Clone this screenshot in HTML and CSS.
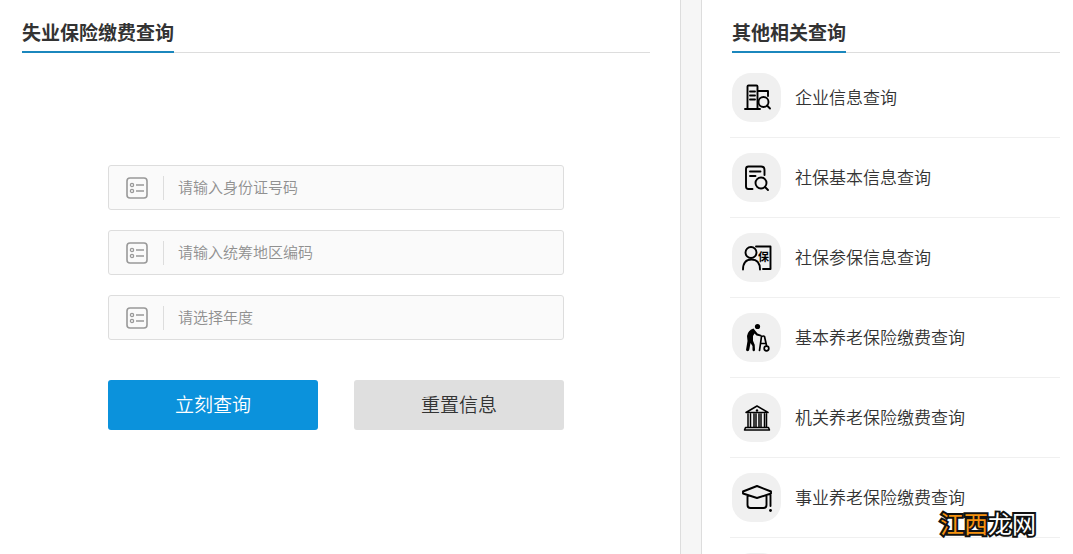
FILE: index.html
```html
<!DOCTYPE html>
<html lang="zh-CN">
<head>
<meta charset="utf-8">
<title>失业保险缴费查询</title>
<link rel="stylesheet" href="styles.css">
</head>
<body>
<svg class="defs" aria-hidden="true">
  <symbol id="icon-form" viewBox="0 0 22 22">
    <rect x="1" y="1" width="20" height="20" rx="3" stroke-width="1.6"/>
    <circle cx="6" cy="8" r="1.6"/><circle cx="6" cy="14" r="1.6"/>
    <path d="M10 8h8M10 14h8"/>
  </symbol>
</svg>
<div class="page">
  <main class="panel query">
    <header class="head"><h1 class="title">失业保险缴费查询</h1></header>
    <form class="form">
      <label class="field">
        <svg class="field-icon"><use href="#icon-form"/></svg>
        <input class="control" type="text" placeholder="请输入身份证号码" aria-label="身份证号码">
      </label>
      <label class="field">
        <svg class="field-icon"><use href="#icon-form"/></svg>
        <input class="control" type="text" placeholder="请输入统筹地区编码" aria-label="统筹地区编码">
      </label>
      <label class="field">
        <svg class="field-icon"><use href="#icon-form"/></svg>
        <select class="control" aria-label="年度"><option>请选择年度</option></select>
      </label>
      <div class="actions">
        <button class="btn primary" type="button">立刻查询</button>
        <button class="btn" type="reset">重置信息</button>
      </div>
    </form>
  </main>
  <aside class="panel related">
    <header class="head"><h2 class="title">其他相关查询</h2></header>
    <nav class="list">
      <a class="row" href="#"><span class="tile"><svg class="icon" viewBox="0 0 30 30">
        <path d="M5.500 26V3.500q0-1 1-1h8q1 0 1 1V26M3 26h15M15.500 8h10.500v5M8 8.500h5M8 12.500h5M8 16.500h5"/><circle cx="21.500" cy="19" r="5"/><path d="M25 22.500l3 3"/>
      </svg></span><span class="label">企业信息查询</span></a>
      <a class="row" href="#"><span class="tile"><svg class="icon" viewBox="0 0 30 30">
        <path d="M10.500 26H6.500q-2.500 0-2.500-2.500V6q0-2.500 2.500-2.500H19q3.500 0 3.500 3.500v5M8 8.500h10.500M8 13h5.500"/><circle cx="19" cy="20" r="5.500"/><path d="M23 24l3 3"/>
      </svg></span><span class="label">社保基本信息查询</span></a>
      <a class="row" href="#"><span class="tile"><svg class="icon" viewBox="0 0 30 30">
        <circle cx="9" cy="9.500" r="5.500"/><path d="M1 26.500q0-10 8.500-10t8.500 10M14 3.500h14.500V26H21"/><text class="glyph" x="16" y="18">保</text>
      </svg></span><span class="label">社保参保信息查询</span></a>
      <a class="row" href="#"><span class="tile"><svg class="icon" viewBox="0 0 30 30">
        <circle class="solid" cx="15.500" cy="3.500" r="2.600"/>
        <path class="solid" d="M11.500 5.500Q6 7 5 13L5.500 18 4 27Q4.500 28.500 6 28q1 0 1.300-1.500L8.500 20l2 3v4q.3 1.500 1.500 1.300 1-.1 1-1.500l-.3-5-1.700-4V13l1.500-2.500 2 2 4.500 1q1-.3.500-1.500l-4-1.500Z"/>
        <path d="M17.500 27.500l2-14q2-1 3 0l2 9M19 20.500h4.500" stroke-width="1.700"/><circle cx="24.500" cy="25.500" r="2.300" stroke-width="1.700"/>
      </svg></span><span class="label">基本养老保险缴费查询</span></a>
      <a class="row" href="#"><span class="tile"><svg class="icon" viewBox="0 0 30 30">
        <path d="M4 9.500L15 3 26 9.500ZM3.500 24.500h23l1 2.500H2.500ZM6 11v13M8.500 11v13M12 11v13M14 11v13M17 11v13M19 11v13M22.500 11v13M24.500 11v13" stroke-width="1.500"/><circle class="solid" cx="15" cy="7.500" r="1.200"/>
      </svg></span><span class="label">机关养老保险缴费查询</span></a>
      <a class="row" href="#"><span class="tile"><svg class="icon" viewBox="0 0 30 30">
        <path d="M1 8.500L15 3l14 5.500v2L15 15 1 10.500ZM5.500 13v9q0 3 3 3h13q3 0 3-3v-9M28.500 12v11"/><circle class="solid" cx="28.500" cy="27.500" r="1.400"/>
      </svg></span><span class="label">事业养老保险缴费查询</span></a>
      <a class="row" href="#" aria-label="更多查询"><span class="tile"></span></a>
    </nav>
  </aside>
</div>
<div class="mark"><span class="mark-accent">江西</span>龙网</div>
</body>
</html>
```
FILE: styles.css
```css
* { box-sizing: border-box; }
body {
  margin: 0;
  background: #f6f6f6;
  color: #333;
  font-family: "Noto Sans CJK SC", "Liberation Sans", sans-serif;
  font-weight: 350;
}
.defs { position: absolute; width: 0; height: 0; }
.page {
  display: grid;
  grid-template-columns: minmax(0, 681fr) minmax(0, 372fr);
  gap: 20px;
  height: 100vh;
  overflow: hidden;
}
.panel { background: #fff; padding-top: 12px; }
.query { padding-left: 22px; padding-right: 30px; border-right: 1px solid #ddd; }
.related { padding-left: 28px; padding-right: 13px; border-left: 1px solid #ddd; }
.head { display: flex; height: 41px; border-bottom: 1px solid #ddd; }
.related .head { margin-left: 2px; }
.title {
  margin: 0;
  height: 41px;
  font-size: 19px;
  line-height: 40px;
  font-weight: 700;
  border-bottom: 2px solid #1b87bd;
}
.form {
  display: flex;
  flex-direction: column;
  gap: 20px;
  max-width: 456px;
  margin: 112px auto 0;
}
.field {
  display: flex;
  align-items: center;
  height: 45px;
  padding-left: 17px;
  background: #fafafa;
  border: 1px solid #ddd;
  border-radius: 3px;
}
.field-icon { width: 22px; height: 22px; margin-right: 15px; flex: none; fill: none; stroke: #999; stroke-width: 1.3; }
.control {
  flex: 1;
  min-width: 0;
  height: 24px;
  padding: 0 14px 2px;
  border: 0;
  border-left: 1px solid #ddd;
  border-radius: 0;
  background: transparent;
  appearance: none;
  outline: 0;
  color: #909090;
  font: inherit;
  font-size: 15px;
  line-height: 22px;
}
.control::placeholder { color: #909090; opacity: 1; }
.actions { display: flex; gap: 36px; margin-top: 20px; }
.btn {
  flex: 1;
  height: 50px;
  padding: 0 0 3px;
  border: 0;
  border-radius: 3px;
  background: #dfdfdf;
  color: #333;
  font: inherit;
  font-size: 19px;
}
.primary { background: #0b92dc; color: #fff; }
.list { margin-top: 5px; }
.row {
  display: flex;
  align-items: center;
  gap: 14px;
  height: 80px;
  padding-left: 2px;
  border-bottom: 1px solid #f0f0f0;
  color: #333;
  font-size: 17px;
  line-height: 24px;
  text-decoration: none;
}
.label { padding-bottom: 2px; }
.tile {
  display: flex;
  align-items: center;
  justify-content: center;
  width: 49px;
  height: 49px;
  border-radius: 19px;
  background: #f0f0f0;
}
.icon { width: 30px; height: 30px; fill: none; stroke: #000; stroke-width: 1.9; stroke-linejoin: round; stroke-linecap: round; }
.solid { fill: #000; stroke: none; }
.glyph { fill: #000; stroke: none; font-size: 11px; font-weight: 700; }
.mark {
  position: absolute;
  right: 37px;
  bottom: 13px;
  color: #fff;
  font-size: 24px;
  line-height: 36px;
  font-weight: 400;
  -webkit-text-stroke: 4px #111;
  paint-order: stroke fill;
}
.mark-accent { color: #f5910f; }
```
